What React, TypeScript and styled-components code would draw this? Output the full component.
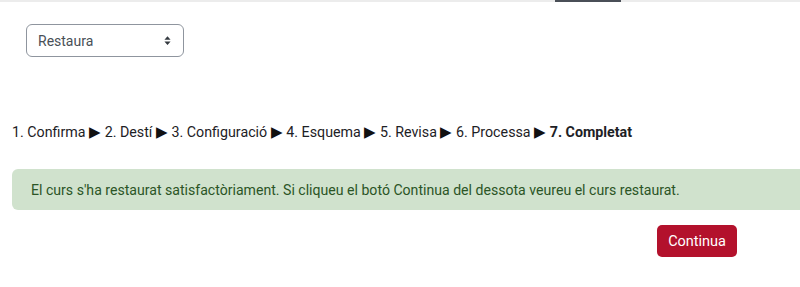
import styled, { createGlobalStyle } from 'styled-components';

const GlobalStyle = createGlobalStyle`
  body {
    margin: 0;
    background: #fff;
    font-family: Roboto, "Noto Sans", sans-serif;
    color: #1d2125;
  }
`;

const steps = ['1. Confirma', '2. Destí', '3. Configuració', '4. Esquema', '5. Revisa', '6. Processa'];

export default function App() {
  return (
    <Page>
      <GlobalStyle />
      <TopBar>
        <ActiveTab />
      </TopBar>
      <Main>
        <SelectWrap>
          <Select defaultValue="restore">
            <option value="restore">Restaura</option>
          </Select>
          <SelectArrow viewBox="0 0 8 10" aria-hidden="true">
            <path d="M4 0 L7.5 4 H0.5 Z M4 10 L7.5 6 H0.5 Z" fill="#343a40" />
          </SelectArrow>
        </SelectWrap>

        <Steps>
          {steps.map((s) => (
            <span key={s}>
              {s} <Arrow>▶</Arrow>{' '}
            </span>
          ))}
          <Current>7. Completat</Current>
        </Steps>

        <Alert>
          El curs s'ha restaurat satisfactòriament. Si cliqueu el botó Continua del dessota veureu el curs restaurat.
        </Alert>

        <ButtonRow>
          <Button type="button">Continua</Button>
        </ButtonRow>
      </Main>
    </Page>
  );
}

const Page = styled.div`
  width: 800px;
  height: 287px;
  overflow: hidden;
`;

const TopBar = styled.div`
  height: 2px;
  background: #ececec;
  position: relative;
`;

const ActiveTab = styled.div`
  position: absolute;
  left: 555px;
  top: 0;
  width: 66px;
  height: 2px;
  background: #4a4f57;
`;

const Main = styled.div`
  padding: 22px 0 0 12px;
`;

const SelectWrap = styled.div`
  position: relative;
  display: inline-block;
  margin-left: 14px;
`;

const Select = styled.select`
  appearance: none;
  width: 158px;
  height: 33px;
  padding: 0 30px 0 11px;
  font-family: Roboto, "Noto Sans", sans-serif;
  font-size: 14px;
  color: #495057;
  background: #fff;
  border: 1px solid #8f959e;
  border-radius: 6px;
`;

const SelectArrow = styled.svg`
  position: absolute;
  right: 13px;
  top: 12px;
  width: 7px;
  height: 9px;
  pointer-events: none;
`;

const Steps = styled.div`
  margin-top: 65px;
  font-size: 14.25px;
  line-height: 20px;
  color: #1d2125;
`;

const Arrow = styled.span`
  font-size: 15px;
  color: #111;
`;

const Current = styled.strong`
  font-weight: 700;
`;

const Alert = styled.div`
  margin-top: 27px;
  margin-right: -20px;
  padding: 12px 19px 11px;
  background: #d0e2cd;
  color: #2b5526;
  border-radius: 6px;
  font-size: 14.1px;
  line-height: 18px;
`;

const ButtonRow = styled.div`
  display: flex;
  justify-content: flex-end;
  padding-right: 63px;
  margin-top: 15px;
`;

const Button = styled.button`
  height: 32px;
  padding: 0 11px;
  background: #b3112c;
  color: #fff;
  border: none;
  border-radius: 5px;
  font-family: Roboto, "Noto Sans", sans-serif;
  font-size: 14.5px;
`;
